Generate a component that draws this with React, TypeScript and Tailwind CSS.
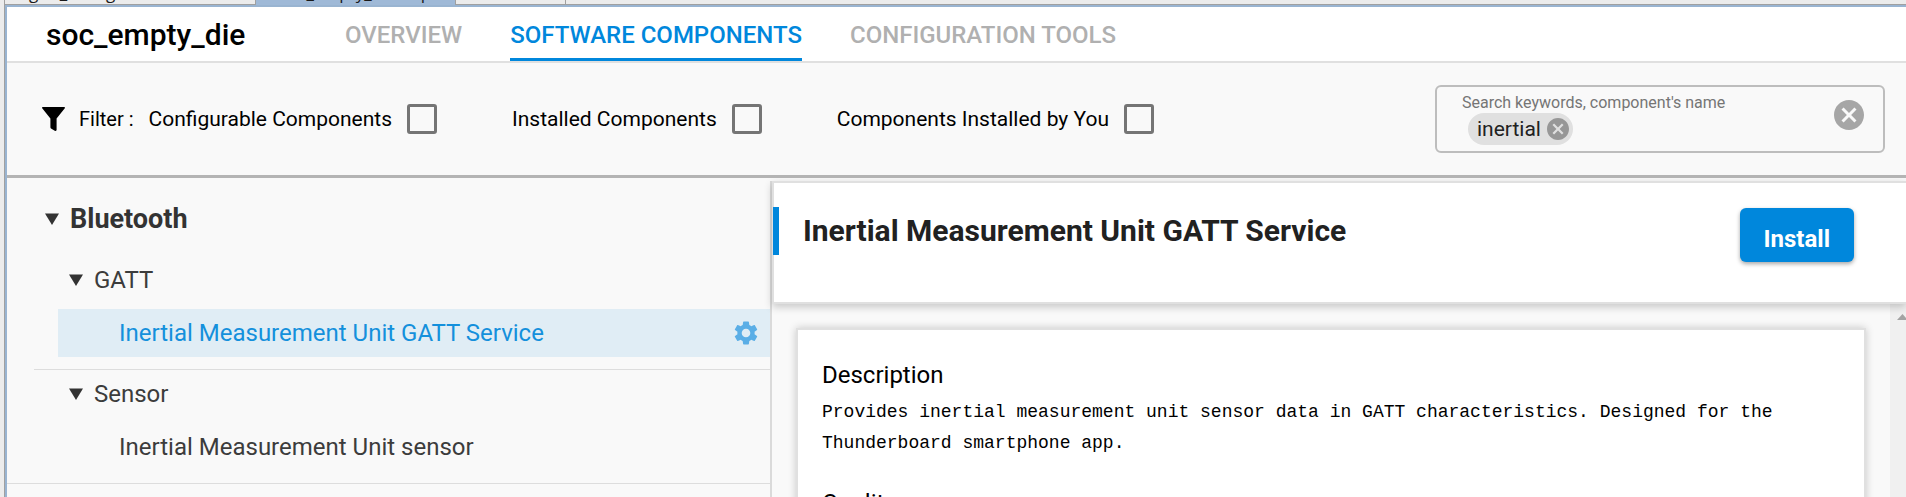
import React from "react";

function Caret() {
  return (
    <svg className="h-3 w-3.5 shrink-0 fill-[#333333]" viewBox="0 0 14 12" aria-hidden="true">
      <path d="M0 0.5H14L7 12Z" />
    </svg>
  );
}

function ClearIcon({ className }: { className: string }) {
  return (
    <svg className={className} viewBox="2 2 20 20" fill="currentColor" aria-hidden="true">
      <path d="M12 2C6.47 2 2 6.47 2 12s4.47 10 10 10 10-4.47 10-10S17.53 2 12 2zm5 13.59L15.59 17 12 13.41 8.41 17 7 15.59 10.59 12 7 8.41 8.41 7 12 10.59 15.59 7 17 8.41 13.41 12 17 15.59z" />
    </svg>
  );
}

function EditorTabs() {
  return (
    <div className="flex h-[5px] shrink-0 overflow-hidden font-['Open_Sans',sans-serif] text-[17px] leading-[22px] text-[#1a1a1a]">
      <div className="flex w-[251px] shrink-0 items-end border-r border-b border-[#a0a0a0] pl-6">
        <span>gatt_configuration.btconf</span>
      </div>
      <div className="flex w-50 shrink-0 items-end border-r border-[#a0a0a0] bg-[#9fb9d7] pb-px pl-6">
        <span>soc_empty_die.slcp</span>
      </div>
      <div className="w-[110px] border-r border-b border-[#a0a0a0]" />
      <div className="grow border-b border-[#a0a0a0]" />
    </div>
  );
}

const tabs = [
  { label: "OVERVIEW", active: false },
  { label: "SOFTWARE COMPONENTS", active: true },
  { label: "CONFIGURATION TOOLS", active: false },
];

function Header() {
  return (
    <header className="flex h-14 shrink-0 items-stretch border-b-2 border-[#e0e0e0] bg-white pl-[39px]">
      <h1 className="w-[299px] pt-1 text-[30px] leading-12 font-medium">soc_empty_die</h1>
      <nav className="flex gap-12">
        {tabs.map((tab) => (
          <a
            key={tab.label}
            href="#"
            className={
              tab.active
                ? "border-b-3 border-[#0087dc] pt-1 text-[24px] leading-12 font-medium text-[#0087dc]"
                : "border-b-3 border-transparent pt-1 text-[24px] leading-12 font-medium text-[#b0b0b0]"
            }
          >
            {tab.label}
          </a>
        ))}
      </nav>
    </header>
  );
}

function FilterBox({ label }: { label: string }) {
  return (
    <label className="flex items-center gap-[15px] text-[21px]">
      {label}
      <input
        type="checkbox"
        className="size-[30px] appearance-none rounded-[3px] border-3 border-[#757575] checked:bg-[#0087dc]"
      />
    </label>
  );
}

function FilterBar() {
  return (
    <div className="flex h-[115px] shrink-0 items-center border-b-3 border-[#b4b4b4] pr-[21px] pl-[35px] text-[20px] leading-6">
      <svg className="h-6 w-[23px]" viewBox="0 0 23 24" aria-hidden="true">
        <path d="M0.8 0H22.2Q23 0 23 1L14.6 11.5V23Q14.4 24 13.2 24L9 21.5Q8.4 21 8.4 20V11.5L0 1Q0 0 0.8 0Z" />
      </svg>
      <span className="mr-[15px] ml-[14px]">Filter :</span>
      <div className="flex gap-[75px]">
        <FilterBox label="Configurable Components" />
        <FilterBox label="Installed Components" />
        <FilterBox label="Components Installed by You" />
      </div>
      <div className="ml-auto flex h-17 w-[450px] items-center justify-between rounded-md border-2 border-[#bdbdbd] pr-[19px] pl-[25px]">
        <div className="flex min-w-0 flex-col">
          <label htmlFor="search" className="text-[16px] leading-5 text-[#757575]">
            Search keywords, component's name
          </label>
          <div className="ml-[6px] flex items-center">
            <span className="flex h-8 items-center gap-[6px] rounded-full bg-[#e0e0e0] pr-1 pl-[9px] text-[21px] text-[#212121]">
              inertial
              <button aria-label="Remove inertial">
                <ClearIcon className="size-[22px] text-[#979797]" />
              </button>
            </span>
            <input id="search" className="w-40 bg-transparent outline-none" />
          </div>
        </div>
        <button aria-label="Clear search" className="mb-2">
          <ClearIcon className="size-[30px] text-[#a6a6a6]" />
        </button>
      </div>
    </div>
  );
}

function ComponentTree() {
  return (
    <aside className="w-[763px] shrink-0 text-[24px] leading-8 text-[#3c3c3c]">
      <button className="mt-[25px] ml-[38px] flex items-center gap-[11px] text-[27px] font-bold text-[#333333]">
        <Caret />
        Bluetooth
      </button>
      <button className="mt-[29px] ml-[62px] flex items-center gap-[11px]">
        <Caret />
        GATT
      </button>
      <div className="mt-[13px] ml-[51px] flex h-12 items-center justify-between bg-[#e0edf5] pr-3 pl-[61px] text-[#1490dc]">
        <a href="#">Inertial Measurement Unit GATT Service</a>
        <button aria-label="Configure component">
          <svg className="size-6 text-[#5aaee6]" viewBox="2 2 20 20" fill="currentColor" aria-hidden="true">
            <path d="M19.14 12.94c.04-.3.06-.61.06-.94 0-.32-.02-.64-.07-.94l2.03-1.58c.18-.14.23-.41.12-.61l-1.92-3.32c-.12-.22-.37-.29-.59-.22l-2.39.96c-.5-.38-1.03-.7-1.62-.94l-.36-2.54c-.04-.24-.24-.41-.48-.41h-3.84c-.24 0-.43.17-.47.41l-.36 2.54c-.59.24-1.13.57-1.62.94l-2.39-.96c-.22-.08-.47 0-.59.22L2.74 8.87c-.12.21-.08.47.12.61l2.03 1.58c-.05.3-.09.63-.09.94s.02.64.07.94l-2.03 1.58c-.18.14-.23.41-.12.61l1.92 3.32c.12.22.37.29.59.22l2.39-.96c.5.38 1.03.7 1.62.94l.36 2.54c.05.24.24.41.48.41h3.84c.24 0 .44-.17.47-.41l.36-2.54c.59-.24 1.13-.56 1.62-.94l2.39.96c.22.08.47 0 .59-.22l1.92-3.32c.12-.22.07-.47-.12-.61l-2.01-1.58zM12 15.6c-1.98 0-3.6-1.62-3.6-3.6s1.62-3.6 3.6-3.6 3.6 1.62 3.6 3.6-1.62 3.6-3.6 3.6z" />
          </svg>
        </button>
      </div>
      <div className="mt-3 ml-[27px] border-t border-[#dddddd] pt-2">
        <button className="ml-[35px] flex items-center gap-[11px]">
          <Caret />
          Sensor
        </button>
      </div>
      <a href="#" className="mt-[21px] ml-28 block pb-5">
        Inertial Measurement Unit sensor
      </a>
      <div className="border-t border-[#dddddd]" />
    </aside>
  );
}

function Detail() {
  return (
    <section className="mt-[3px] flex min-w-0 grow flex-col border-l-2 border-[#dadada]">
      <div className="relative z-10 flex h-[123px] shrink-0 items-start justify-between border-2 border-r-0 border-[#e0e0e0] bg-white pr-[52px] shadow-[0_3px_8px_rgba(0,0,0,0.2)]">
        <h2 className="mt-6 -ml-px flex h-12 border-l-6 border-[#0087dc] pl-6 text-[30px] leading-12 font-bold text-[#212121]">
          Inertial Measurement Unit GATT Service
        </h2>
        <button className="mt-[25px] h-[54px] rounded-md bg-[#0087dc] px-6 pt-2 text-[24px] leading-11 font-bold text-white shadow-[0_2px_4px_rgba(0,0,0,0.35)]">
          Install
        </button>
      </div>
      <div className="flex grow">
        <div className="min-w-0 grow px-6 pt-6">
          <article className="h-full border-2 border-b-0 border-[#e0e0e0] bg-white px-6 pt-[29px] shadow-[0_0_8px_rgba(0,0,0,0.2)]">
            <h3 className="text-[24px] leading-8">Description</h3>
            <p className="mt-1.5 font-['Liberation_Mono',monospace] text-[18px] leading-[31px]">
              Provides inertial measurement unit sensor data in GATT characteristics. Designed for the
              Thunderboard smartphone app.
            </p>
            <h3 className="mt-7 text-[24px] leading-8">Quality</h3>
          </article>
        </div>
        <div className="flex w-4 shrink-0 justify-end overflow-hidden bg-[#f0f0f0] pt-[10px]">
          <svg className="h-[6px] w-[9px] fill-[#a3a3a3]" viewBox="0 0 9 6" aria-hidden="true">
            <path d="M0 6L5.5 0L9 4V6Z" />
          </svg>
        </div>
      </div>
    </section>
  );
}

export default function App() {
  return (
    <div className="flex h-screen flex-col overflow-hidden bg-[#ececec] pl-1 font-[Roboto,sans-serif] text-black">
      <div className="flex min-h-0 grow flex-col border-l border-[#a0a0a0]">
        <EditorTabs />
        <div className="flex min-h-0 grow flex-col border-t-2 border-l-2 border-[#99b4d1] bg-[#f9f9f9]">
          <Header />
          <FilterBar />
          <main className="flex min-h-0 grow overflow-hidden">
            <ComponentTree />
            <Detail />
          </main>
        </div>
      </div>
    </div>
  );
}
